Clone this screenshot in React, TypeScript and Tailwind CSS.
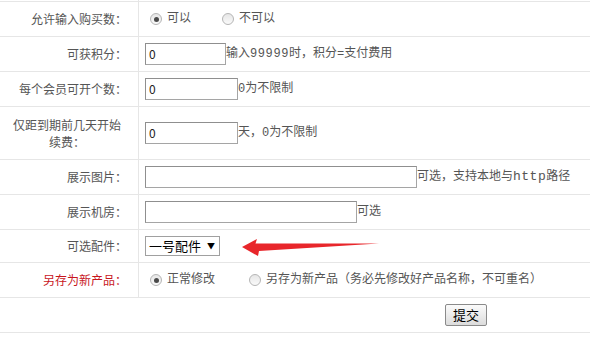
const font = { fontFamily: '"Noto Sans CJK SC", "Liberation Sans", sans-serif' };
const mono = { fontFamily: '"Liberation Mono", "Noto Sans CJK SC", monospace' };

function Radio({ checked }: { checked?: boolean }) {
  return (
    <span className="inline-flex h-[12px] w-[12px] items-center justify-center rounded-full border border-[#b5b5b5] bg-gradient-to-b from-[#e6e6e6] to-[#fafafa]">
      {checked && <span className="h-[5px] w-[5px] rounded-full bg-[#4a4a4a]" />}
    </span>
  );
}

function Row({
  label,
  children,
  h = "h-[35px]",
  red,
}: {
  label: React.ReactNode;
  children: React.ReactNode;
  h?: string;
  red?: boolean;
}) {
  return (
    <div className={`grid grid-cols-[139px_1fr] border-b border-[#e6e6e6] ${h}`}>
      <div
        className={`flex items-center justify-end border-r border-[#e6e6e6] pr-[11px] text-[12px] ${
          red ? "text-[#c8161d]" : "text-[#555]"
        }`}
      >
        {label}
      </div>
      <div className="relative flex items-center pl-[6px] text-[12px] text-[#555]" style={mono}>
        {children}
      </div>
    </div>
  );
}

function TextBox({ w, value }: { w: string; value?: string }) {
  return (
    <div
      className={`flex h-[22px] items-center border border-[#a5a5a5] border-t-[#8f8f8f] border-l-[#8f8f8f] bg-white pl-[3px] text-[12px] text-[#222] ${w}`}
      style={font}
    >
      {value}
    </div>
  );
}

export default function App() {
  return (
    <div className="h-[337px] w-[590px] overflow-hidden bg-white" style={font}>
      <div className="grid h-[2px] grid-cols-[139px_1fr] border-b border-[#e6e6e6]">
        <div className="border-r border-[#e6e6e6]" />
        <div />
      </div>

      <Row label="允许输入购买数：">
        <span className="ml-[5px] flex items-center gap-[5px]">
          <Radio checked />
          <span>可以</span>
        </span>
        <span className="ml-[31px] flex items-center gap-[5px]">
          <Radio />
          <span>不可以</span>
        </span>
      </Row>

      <Row label="可获积分：">
        <TextBox w="w-[81px]" value="0" />
        <span>
          输入<span className="tracking-[0.6px]">99999</span>时，积分=支付费用
        </span>
      </Row>

      <Row label="每个会员可开个数：">
        <TextBox w="w-[93px]" value="0" />
        <span>0为不限制</span>
      </Row>

      <div className="grid h-[53px] grid-cols-[139px_1fr] border-b border-[#e6e6e6]">
        <div className="flex items-center justify-center border-r border-[#e6e6e6] pl-[6px] pr-[10px] text-center text-[12px] leading-[17px] text-[#555]">
          <span>
            仅距到期前几天开始
            <br />
            续费：
          </span>
        </div>
        <div className="flex items-center pl-[6px] text-[12px] text-[#555]" style={mono}>
          <TextBox w="w-[93px]" value="0" />
          <span>天，0为不限制</span>
        </div>
      </div>

      <Row label="展示图片：">
        <TextBox w="w-[272px]" />
        <span>
          可选，支持本地与<span className="text-[13px] tracking-[0.5px]">http</span>路径
        </span>
      </Row>

      <Row label="展示机房：">
        <TextBox w="w-[212px]" />
        <span>可选</span>
      </Row>

      <Row label="可选配件：" h="h-[33px]">
        <div
          className="flex h-[20px] w-[75px] items-center border border-[#a0a0a0] bg-white pl-[3px] text-[13px] text-black"
          style={font}
        >
          <span>一号配件</span>
          <span className="ml-[6px] text-[8px]">▼</span>
        </div>
        <svg
          className="absolute left-[102px] top-[8px]"
          width="140"
          height="20"
          viewBox="0 0 140 20"
        >
          <polygon points="1,9 16,1 14.5,5.5 138,5.5 18,13 17,18" fill="#e8262b" />
        </svg>
      </Row>

      <Row label="另存为新产品：" red>
        <span className="ml-[5px] flex items-center gap-[5px]">
          <Radio checked />
          <span>正常修改</span>
        </span>
        <span className="ml-[34px] flex items-center gap-[5px]">
          <Radio />
          <span>另存为新产品（务必先修改好产品名称，不可重名）</span>
        </span>
      </Row>

      <div className="flex h-[35px] items-center border-b border-[#e6e6e6] pl-[445px]">
        <button className="flex h-[22px] w-[42px] items-center justify-center rounded-[2px] border border-[#8a8a8a] bg-gradient-to-b from-[#fbfbfb] to-[#dcdcdc] text-[13px] text-black">
          提交
        </button>
      </div>
    </div>
  );
}
